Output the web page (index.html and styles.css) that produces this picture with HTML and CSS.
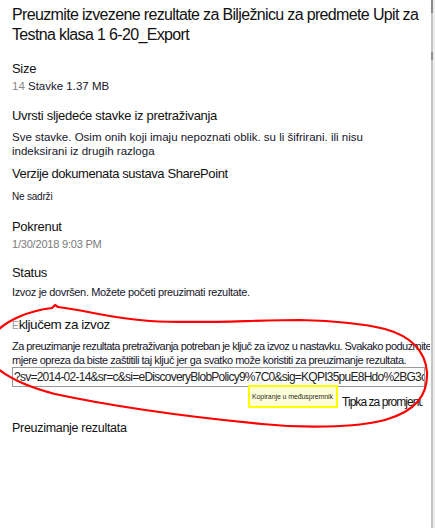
FILE: index.html
```html
<!DOCTYPE html>
<html lang="hr">
<head>
    <meta charset="UTF-8">
    <meta name="viewport" content="width=device-width, initial-scale=1.0">
    <title>Preuzimanje rezultata</title>
    <link rel="stylesheet" href="styles.css">
</head>
<body>
    <div class="window">
        <div class="panel">
            <h1 class="title">Preuzmite izvezene rezultate za Bilježnicu za predmete Upit za<br>Testna klasa 1 6-20_Export</h1>

            <div class="field field-size">
                <div class="label small">Size</div>
                <div class="value"><span class="muted">14</span> Stavke 1.37 MB</div>
            </div>

            <div class="field field-items">
                <div class="label">Uvrsti sljedeće stavke iz pretraživanja</div>
                <div class="value">Sve stavke. Osim onih koji imaju nepoznati oblik. su li šifrirani. ili nisu<br>indeksirani iz drugih razloga</div>
            </div>

            <div class="field field-versions">
                <div class="label">Verzije dokumenata sustava SharePoint</div>
                <div class="value tiny">Ne sadrži</div>
            </div>

            <div class="field field-started">
                <div class="label">Pokrenut</div>
                <div class="value date">1/30/2018 9:03 PM</div>
            </div>

            <div class="field field-status">
                <div class="label">Status</div>
                <div class="value">Izvoz je dovršen. Možete početi preuzimati rezultate.</div>
            </div>

            <div class="field field-key">
                <div class="label"><span class="faded">E</span>ključem za izvoz</div>
                <div class="value nowrap">
                    <div class="line">Za preuzimanje rezultata pretraživanja potreban je ključ za izvoz u nastavku. Svakako poduzmite</div>
                    <div class="line loose">mjere opreza da biste zaštitili taj ključ jer ga svatko može koristiti za preuzimanje rezultata.</div>
                </div>
                <div class="key-box">?sv=2014-02-14&amp;sr=c&amp;si=eDiscoveryBlobPolicy9%7C0&amp;sig=KQPI35puE8Hdo%2BG3cWq</div>
                <div class="key-actions">
                    <span class="copy-tip">Kopiranje u međuspremnik</span>
                    <span class="toggle">Tipka za promjenu</span>
                </div>
            </div>

            <div class="field field-download">
                <div class="label">Preuzimanje rezultata</div>
            </div>
        </div>

        <div class="edge"></div>

        <!-- hand-drawn marker around the export key -->
        <svg class="marker" width="435" height="528" viewBox="0 0 435 528">
            <path d="M -3 331 C 8 320, 28 311, 52 308 L 55 305 L 58 307 C 90 311, 108 318, 150 321 C 200 324, 250 320, 300 320 C 340 321, 365 324, 385 329 C 410 336, 425 350, 427 372 C 428 395, 416 411, 385 420 C 355 428, 300 428, 262 424 C 200 418, 120 408, 55 394 C 28 387, 10 379, -3 368"
                  fill="none" stroke="#f00" stroke-width="2.2" stroke-linecap="round" stroke-linejoin="round"/>
        </svg>
    </div>
</body>
</html>
```

FILE: styles.css
```css
body {
    margin: 0;
    background: #fff;
    font-family: "Liberation Sans", Arial, sans-serif;
    color: #111;
}

.window {
    position: relative;
    display: flex;
    width: 435px;
    height: 528px;
    overflow: hidden;
}

.panel {
    flex: 1;
    min-width: 0;
    padding: 5px 0 0 12px;
    overflow: hidden;
}

.edge {
    width: 2px;
    margin-left: 1px;
    background: linear-gradient(to bottom, #8a8a8a 0, #8a8a8a 13px, #c4c4c4 13px, #c4c4c4 52px, #909090 52px, #909090 60px, #c4c4c4 60px);
    border-right: 2px solid #ececec;
}

.title {
    margin: 0;
    font-size: 16px;
    font-weight: normal;
    line-height: 20px;
    letter-spacing: -0.65px;
    white-space: nowrap;
    color: #111;
}

.label {
    font-size: 13px;
    line-height: 16px;
    letter-spacing: -0.3px;
    color: #111;
}

.value {
    margin-top: 4px;
    font-size: 11.5px;
    line-height: 14px;
    color: #16162a;
}

.muted {
    color: #8a8a8a;
}

.faded {
    font-size: 10px;
    letter-spacing: 0;
    color: #999;
}

.nowrap {
    white-space: nowrap;
}

/* per-field spacing */
.field-size { margin-top: 16px; }
.field-size .value { margin-top: 2px; }

.field-items { margin-top: 15px; }
.field-items .value { margin-top: 6px; }

.field-versions { margin-top: 8px; }
.field-versions .label {
    font-size: 13px;
    letter-spacing: -0.4px;
}
.value.tiny {
    margin-top: 8px;
    font-size: 10px;
    letter-spacing: -0.2px;
}

.field-started { margin-top: 15px; }
.value.date {
    margin-top: 2px;
    font-size: 11px;
    letter-spacing: -0.2px;
    color: #7a7a7a;
}

.field-status { margin-top: 14px; }
.field-status .value {
    font-size: 11px;
    letter-spacing: -0.35px;
}

.field-key { margin-top: 18px; }
.field-key .label {
    font-size: 13.5px;
    letter-spacing: -0.45px;
}
.field-key .value {
    margin-top: 5px;
    font-size: 11px;
    letter-spacing: -0.55px;
}
.field-key .value .loose {
    letter-spacing: -0.48px;
}

.key-box {
    width: 413px;
    height: 20px;
    box-sizing: border-box;
    border: 1px solid #9a9a9a;
    padding: 1px 0 0 1px;
    font-size: 12px;
    line-height: 16px;
    letter-spacing: -0.75px;
    white-space: nowrap;
    overflow: hidden;
    color: #222;
}

.key-actions {
    display: flex;
    align-items: flex-end;
    gap: 4px;
    margin-top: -2px;
    padding-left: 236px;
    white-space: nowrap;
}

.copy-tip {
    display: flex;
    align-items: center;
    flex: none;
    width: 90px;
    height: 23px;
    box-sizing: border-box;
    padding: 0 0 0 2px;
    border: 2px solid #ffff00;
    background: #ffffd8;
    font-size: 7px;
    letter-spacing: -0.1px;
    color: #2a2a2a;
    overflow: hidden;
}

.toggle {
    flex: none;
    width: 81px;
    margin-bottom: -2px;
    font-size: 12px;
    line-height: 16px;
    letter-spacing: -0.95px;
    color: #111;
    overflow: hidden;
}

.field-download { margin-top: 12px; }
.field-download .label {
    font-size: 12.5px;
    letter-spacing: -0.3px;
}

.marker {
    position: absolute;
    left: 0;
    top: 0;
    pointer-events: none;
}
```
